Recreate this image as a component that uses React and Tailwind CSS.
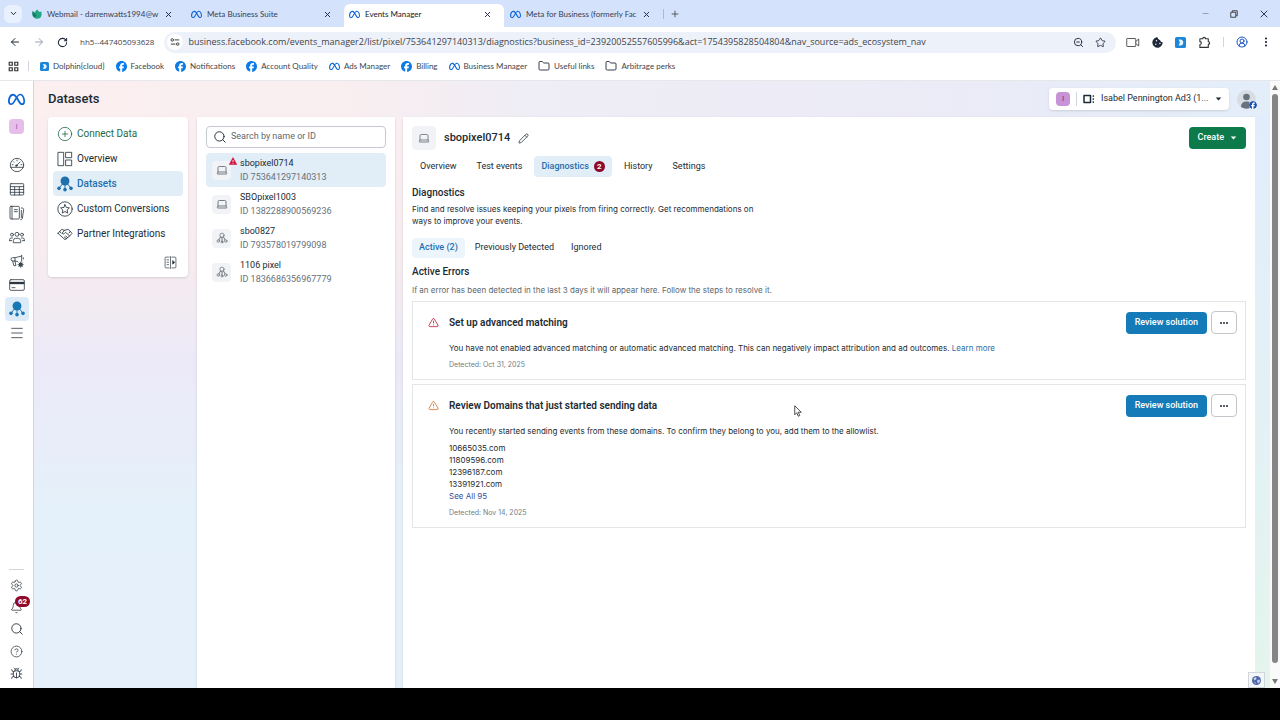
import React from "react";
import {
  ArrowLeft,
  ArrowRight,
  Bell,
  Bug,
  ChevronDown,
  CircleHelp,
  CirclePlus,
  CircleUserRound,
  EllipsisVertical,
  Folder,
  Laptop,
  Menu,
  Minus,
  Pencil,
  Plus,
  RotateCw,
  Search,
  Settings,
  Star,
  TriangleAlert,
  X,
  ZoomOut,
} from "lucide-react";
import { FaCookieBite, FaFacebook, FaMeta } from "react-icons/fa6";

/* ---------------- DATA ---------------- */
const PAGE_URL =
  "business.facebook.com/events_manager2/list/pixel/753641297140313/diagnostics?business_id=23920052557605996&act=1754395828504804&nav_source=ads_ecosystem_nav";

const BOOKMARKS = [
  { label: "Dolphin{cloud}", icon: "dolphin" },
  { label: "Facebook", icon: "facebook" },
  { label: "Notifications", icon: "facebook" },
  { label: "Account Quality", icon: "facebook" },
  { label: "Ads Manager", icon: "meta" },
  { label: "Billing", icon: "facebook" },
  { label: "Business Manager", icon: "meta" },
  { label: "Useful links", icon: "folder" },
  { label: "Arbitrage perks", icon: "folder" },
];

const PIXELS = [
  { name: "sbopixel0714", id: "753641297140313", icon: "laptop", active: true },
  { name: "SBOpixel1003", id: "1382288900569236", icon: "laptop" },
  { name: "sbo0827", id: "793578019799098", icon: "nodes" },
  { name: "1106 pixel", id: "1836686356967779", icon: "nodes" },
];

const DOMAINS = ["10665035.com", "11809596.com", "12396187.com", "13391921.com"];

/* ---------------- ICONS ---------------- */
const Svg = ({ size = 16, children }) => (
  <svg
    width={size}
    height={size}
    viewBox="0 0 24 24"
    fill="none"
    stroke="currentColor"
    strokeWidth="1.2"
    strokeLinecap="round"
    strokeLinejoin="round"
    className="shrink-0"
    aria-hidden="true"
  >
    {children}
  </svg>
);

const NodesSolid = () => (
  <Svg>
    <g fill="currentColor" stroke="none">
      <circle cx="12" cy="7.5" r="6.7" />
      <circle cx="3" cy="18.5" r="2.7" />
      <circle cx="12" cy="20.5" r="2.7" />
      <circle cx="21" cy="18.5" r="2.7" />
    </g>
    <path d="M12 12v8M8 12l-4.500 6M16 12l4.500 6" strokeWidth="1.4" />
  </Svg>
);

const NodesOutline = () => (
  <Svg size={12}>
    <circle cx="12" cy="6.500" r="4.200" />
    <circle cx="4.500" cy="18" r="2.500" />
    <circle cx="12" cy="20" r="2" />
    <circle cx="19.500" cy="18" r="2.500" />
    <path d="M12 11v7M9 10 6 15.500M15 10l3 5.500" strokeWidth="1.600" />
  </Svg>
);

const OverviewIcon = () => (
  <Svg>
    <rect x="2" y="2" width="8" height="20" />
    <rect x="13.500" y="2" width="8.500" height="8" />
    <rect x="13.500" y="13.500" width="8.500" height="8.500" />
  </Svg>
);

const StarCircle = () => (
  <Svg>
    <circle cx="12" cy="12" r="10.800" />
    <path d="m12 5.500 2 4.200 4.600.6-3.400 3.200.9 4.600-4.100-2.300-4.100 2.300.9-4.600-3.400-3.200 4.600-.6z" />
  </Svg>
);

const HandshakeIcon = () => (
  <Svg>
    <path d="M1.500 11 7 5l4 1.500L7.500 11q1.500 2 4 0l1.500-1.500 6 5.500-7 5.500L1.500 11z" />
    <path d="M11 6.500 17 5l5.500 6-3.500 4M16 17.500l-3-2.500M14 19l-3-2.500M4 8.200l2 2.300M20 8.200l-2 2.300" />
  </Svg>
);

const GaugeIcon = () => (
  <Svg>
    <circle cx="12" cy="12" r="10" />
    <path d="M2.500 15.500h19M11 13l5.500-5.500M12 4.500v1.200M6.500 7l.9.9M4.800 11.500H6M18 11.500h1.200" />
    <circle cx="11" cy="13" r="1.300" />
  </Svg>
);

const TableIcon = () => (
  <Svg>
    <rect x="2" y="4" width="20" height="17" rx="1" />
    <path d="M2 8.500h20M2 12.800h20M2 17h20M8.500 8.500V21M15.500 8.500V21" />
  </Svg>
);

const PagesIcon = () => (
  <Svg>
    <rect x="1.500" y="2" width="14" height="19" rx="1.500" />
    <path d="M4.500 2v19M8 7h4.500M8 10h4.500M18.500 4.500H20q2 .3 2 2.500l-2 13q-.4 2-2.500 2.200M18.500 8v11" />
  </Svg>
);

const PeopleIcon = () => (
  <Svg>
    <circle cx="12" cy="8" r="3" />
    <circle cx="4.500" cy="8.500" r="2.200" />
    <circle cx="19.500" cy="8.500" r="2.200" />
    <path d="M6.500 20v-2.500q.3-3.500 3.500-3.500h4q3.200 0 3.500 3.500V20zM1 17.500v-1.800q.2-2.200 2.500-2.200h2M23 17.500v-1.800q-.2-2.200-2.500-2.200h-2M1 17.500h3M20 17.500h3" />
  </Svg>
);

const MegaphoneIcon = () => (
  <Svg>
    <path d="M19 3.500v9M19 4.500 9.500 7H5.500Q3 7 3 9.500T5.500 12H10l3 1M9 7v5M5.500 12l1.800 7h3L9 12M21.500 7v2" />
    <circle cx="17.500" cy="17.500" r="2.200" strokeWidth="1.800" />
    <path d="M17.500 13.500v8M13.500 17.500h8M14.700 14.700l5.600 5.600M20.300 14.700l-5.600 5.600" strokeWidth="1" />
  </Svg>
);

const CardIcon = () => (
  <Svg>
    <rect x="1" y="4" width="22" height="16" rx="2" />
    <path d="M1 9h22" strokeWidth="3.500" strokeLinecap="butt" />
    <path d="M4.500 16H9" />
  </Svg>
);

const CollapseIcon = () => (
  <Svg size={13}>
    <path d="M9.500 2H4Q2 2 2 4v16q0 2 2 2h5.500M14.500 2H20q2 0 2 2v16q0 2-2 2h-5.500M12 1v22" />
    <path d="M5.500 7h3M5.500 11.500h3M5.500 16h3" />
    <path d="M16 9v6l3.500-3z" fill="currentColor" />
  </Svg>
);

const AlertBadge = () => (
  <svg width="8" height="8" viewBox="0 0 16 16" className="absolute -top-1 -right-1.5" aria-hidden="true">
    <path d="M8 1l7.500 14H.5z" fill="#d3133f" stroke="#d3133f" strokeLinejoin="round" />
    <path d="M8 6v4.500M8 12v1.500" stroke="#fff" strokeWidth="1.600" />
  </svg>
);

const AccountIcon = () => (
  <Svg size={12}>
    <rect x="2" y="5" width="13" height="14" strokeWidth="3" />
    <path d="M20.500 5v2M20.500 11v2M20.500 17v2" strokeWidth="2.400" />
  </Svg>
);

const TuneIcon = () => (
  <svg width="10" height="10" viewBox="0 0 24 24" fill="none" stroke="#3c4043" strokeWidth="2.400" aria-hidden="true">
    <circle cx="5.500" cy="7" r="3" />
    <path d="M11 7h11M2 17h11" />
    <circle cx="18.500" cy="17" r="3" />
  </svg>
);

const AppsIcon = () => (
  <svg width="11" height="11" viewBox="0 0 22 22" fill="none" stroke="#333" strokeWidth="2.400" aria-hidden="true">
    <path d="M2.500 2.500h6v6h-6zM13.500 2.500h6v6h-6zM2.500 13.500h6v6h-6zM13.500 13.500h6v6h-6z" />
  </svg>
);

const DolphinIcon = ({ size = 9 }) => (
  <svg width={size} height={size} viewBox="0 0 18 18" className="shrink-0" aria-hidden="true">
    <rect width="18" height="18" rx="3" fill="#1c86d8" />
    <path d="M6 4h2.500q5 .5 5 5t-5 5H6l2-5z" fill="#e8f7ff" />
  </svg>
);

const WebmailIcon = () => (
  <svg width="10" height="10" viewBox="0 0 20 20" className="shrink-0" aria-hidden="true">
    <path d="M1 4l4 3 5-6 5 5 4-1v8q-2 6.500-9 6.500T1 12z" fill="#23a583" />
    <path d="M1 4l9 10-6 2q-3-2-3-5z" fill="#157a66" />
  </svg>
);

const VideoIcon = () => (
  <svg width="14" height="11" viewBox="0 0 28 22" fill="none" stroke="#333" strokeWidth="1.600" aria-hidden="true">
    <rect x="1.500" y="3" width="18" height="16" rx="1" />
    <path d="M19.500 9l6-5v14l-6-5" />
  </svg>
);

const PuzzleIcon = () => (
  <svg width="13" height="13" viewBox="0 0 24 24" fill="none" stroke="#333" strokeWidth="2" strokeLinejoin="round" aria-hidden="true">
    <path d="M3.500 5h5.300a2.500 2.500 0 1 1 5 0H19v5.500a2.500 2.500 0 1 1 0 5V21H3.500v-5.200a2.700 2.700 0 0 0 0-5.400z" />
  </svg>
);

const RestoreIcon = () => (
  <svg width="8" height="8" viewBox="0 0 16 16" fill="none" stroke="#222" strokeWidth="1.600" aria-hidden="true">
    <path d="M1.500 4.500h10v10h-10zM4.500 4V1.500h10v10H12" />
  </svg>
);

const Caret = () => (
  <svg width="7" height="4" viewBox="0 0 8 5" fill="currentColor" aria-hidden="true">
    <path d="M.5.500h7L4 4.500z" />
  </svg>
);

const MetaIcon = () => <FaMeta size={11} className="shrink-0 text-[#0a66d8]" />;

const BookmarkIcon = ({ icon }) => {
  if (icon === "dolphin") return <DolphinIcon />;
  if (icon === "facebook") return <FaFacebook size={11} className="text-[#0b7be8]" />;
  if (icon === "meta") return <MetaIcon />;
  return <Folder size={12} strokeWidth={1.8} className="text-gray-800" />;
};

/* ---------------- BROWSER CHROME ---------------- */
const BrowserTab = ({ title, icon, active }) => (
  <div
    className={
      active
        ? "flex items-center w-[160px] h-[23px] pb-[3px] pl-[5px] pr-3 gap-[5px] rounded-t-md bg-white text-gray-900"
        : "flex items-center w-[159px] h-[23px] pb-[3px] pl-[6px] pr-3 gap-[5px] text-gray-700"
    }
  >
    {icon}
    <span className="flex-1 whitespace-nowrap">{title}</span>
    <button aria-label={`Close ${title}`}>
      <X size={9} strokeWidth={2.5} className="text-gray-800" />
    </button>
  </div>
);

const BrowserChrome = () => (
  <header className="shrink-0 font-['Lato',sans-serif] text-[#41444a]">
    <div className="flex items-end h-[27px] bg-[#d5e2fc] text-[8px]">
      <button aria-label="Search tabs" className="flex items-center justify-center self-center w-[18px] h-[18px] ml-1 mr-1 rounded-md bg-[#e9f1fe]">
        <ChevronDown size={9} strokeWidth={2.5} className="text-gray-900" />
      </button>
      <BrowserTab title="Webmail - darrenwatts1994@w" icon={<WebmailIcon />} />
      <BrowserTab title="Meta Business Suite" icon={<MetaIcon />} />
      <BrowserTab title="Events Manager" active icon={<MetaIcon />} />
      <BrowserTab title="Meta for Business (formerly Fac" icon={<MetaIcon />} />
      <div className="flex items-center h-[23px] pb-[3px] gap-[6px]">
        <span className="w-px h-[10px] bg-[#a9bbdd]" />
        <button aria-label="New tab">
          <Plus size={10} strokeWidth={2} />
        </button>
      </div>
      <div className="flex items-center h-[27px] gap-5 ml-auto pr-[10px] text-gray-800">
        <button aria-label="Minimize" className="text-gray-500">
          <Minus size={9} strokeWidth={1.5} />
        </button>
        <button aria-label="Restore">
          <RestoreIcon />
        </button>
        <button aria-label="Close window">
          <X size={12} strokeWidth={1.8} />
        </button>
      </div>
    </div>

    <div className="flex items-center h-[30px] bg-white pl-[9px] pr-2 font-['Open_Sans',sans-serif]">
      <div className="flex items-center gap-3 text-gray-800">
        <button aria-label="Back">
          <ArrowLeft size={12} strokeWidth={2} />
        </button>
        <button aria-label="Forward" className="text-gray-400">
          <ArrowRight size={12} strokeWidth={2} />
        </button>
        <button aria-label="Reload">
          <RotateCw size={11} strokeWidth={2.2} />
        </button>
      </div>
      <span className="ml-3 text-[8px] whitespace-nowrap">hh5--447405093628</span>
      <div className="flex flex-1 items-center h-[21px] ml-[10px] pl-[3px] pr-[10px] rounded-full bg-[#edf1fa]">
        <span className="flex items-center justify-center w-[16px] h-[16px] rounded-full bg-white">
          <TuneIcon />
        </span>
        <input
          aria-label="Address"
          className="flex-1 ml-[5px] bg-transparent text-[9px] outline-none"
          defaultValue={PAGE_URL}
        />
        <div className="flex items-center gap-[11px] text-gray-800">
          <ZoomOut size={11} strokeWidth={2} />
          <Star size={11} strokeWidth={1.8} />
        </div>
      </div>
      <div className="flex items-center gap-3 ml-[10px] text-gray-800">
        <VideoIcon />
        <FaCookieBite size={11} />
        <DolphinIcon size={11} />
        <PuzzleIcon />
        <span className="w-px h-[10px] bg-gray-300" />
        <CircleUserRound size={12} strokeWidth={2} className="text-[#1a56c4]" />
        <EllipsisVertical size={12} strokeWidth={2.4} />
      </div>
    </div>

    <nav className="flex items-center h-[24px] pb-[5px] pl-2 bg-white border-b border-gray-200 text-[8px]">
      <AppsIcon />
      <span className="w-px h-[10px] ml-[9px] mr-[11px] bg-gray-300" />
      <ul className="flex items-center gap-[11px]">
        {BOOKMARKS.map((b) => (
          <li key={b.label}>
            <a href="#" className="flex items-center gap-1 whitespace-nowrap">
              <BookmarkIcon icon={b.icon} />
              {b.label}
            </a>
          </li>
        ))}
      </ul>
    </nav>
  </header>
);

/* ---------------- LEFT RAIL ---------------- */
const RailButton = ({ label, active, children }) => (
  <button
    aria-label={label}
    className={
      active
        ? "flex items-center justify-center w-6 h-6 rounded-sm bg-[#dcebf7] text-[#1877b5]"
        : "flex items-center justify-center w-6 h-6"
    }
  >
    {children}
  </button>
);

const Rail = () => (
  <aside className="flex flex-col items-center justify-between shrink-0 w-[34px] pt-[6px] pb-1 bg-white border-r border-gray-300 text-[#2b3640]">
    <div className="flex flex-col items-center">
      <RailButton label="Home">
        <FaMeta size={17} className="text-[#0a66d8]" />
      </RailButton>
      <span className="flex items-center justify-center w-[15px] h-[15px] mt-2 mb-[19px] rounded-sm bg-[#e5bfe9] text-[8px] text-[#a05bb0]">
        I
      </span>
      <RailButton label="Account overview"><GaugeIcon /></RailButton>
      <RailButton label="Campaigns"><TableIcon /></RailButton>
      <RailButton label="Ads reporting"><PagesIcon /></RailButton>
      <RailButton label="Audiences"><PeopleIcon /></RailButton>
      <RailButton label="Advertising settings"><MegaphoneIcon /></RailButton>
      <RailButton label="Billing and payments"><CardIcon /></RailButton>
      <RailButton label="Events Manager" active><NodesSolid /></RailButton>
      <RailButton label="All tools"><Menu size={16} strokeWidth={1.2} /></RailButton>
    </div>
    <div className="flex flex-col items-center">
      <span className="w-[15px] h-px mb-1 bg-gray-300" />
      <button aria-label="Settings" className="flex items-center h-[22px]"><Settings size={13} strokeWidth={1.4} /></button>
      <button aria-label="Notifications" className="relative flex items-center h-[22px]">
        <Bell size={13} strokeWidth={1.4} />
        <span className="absolute top-0 left-[5px] w-[15px] h-[11px] rounded-full bg-[#8f0a2a] text-white text-[8px] leading-[11px] font-bold text-center">
          62
        </span>
      </button>
      <button aria-label="Search" className="flex items-center h-[22px]"><Search size={14} strokeWidth={1.6} /></button>
      <button aria-label="Help" className="flex items-center h-[22px]"><CircleHelp size={13} strokeWidth={1.4} /></button>
      <button aria-label="Report a bug" className="flex items-center h-[22px]"><Bug size={13} strokeWidth={1.6} /></button>
    </div>
  </aside>
);

/* ---------------- SECTION MENU ---------------- */
const MenuItem = ({ icon, label, className = "" }) => (
  <li>
    <a href="#" className={`flex items-center h-[25px] gap-1 pl-1 rounded-sm whitespace-nowrap ${className}`}>
      {icon}
      {label}
    </a>
  </li>
);

const SectionMenu = () => (
  <nav className="self-start shrink-0 w-[140px] px-[5px] pt-1 pb-2 rounded-sm bg-white shadow-sm text-[10px]">
    <ul>
      <MenuItem icon={<CirclePlus size={16} strokeWidth={1.2} />} label="Connect Data" className="text-[#1d6b4a]" />
      <MenuItem icon={<OverviewIcon />} label="Overview" />
      <MenuItem icon={<NodesSolid />} label="Datasets" className="bg-[#e1eef8] text-[#1f6fae] font-medium" />
      <MenuItem icon={<StarCircle />} label="Custom Conversions" />
      <MenuItem icon={<HandshakeIcon />} label="Partner Integrations" />
    </ul>
    <div className="flex justify-end pt-[10px] pr-[6px]">
      <button aria-label="Collapse menu">
        <CollapseIcon />
      </button>
    </div>
  </nav>
);

/* ---------------- PIXEL LIST ---------------- */
const PixelList = () => (
  <section className="shrink-0 w-[198px] px-[9px] pt-[9px] bg-white shadow-sm">
    <label className="flex items-center h-[22px] gap-1 px-[6px] border border-[#c5cad0] rounded-sm">
      <Search size={14} strokeWidth={1.6} />
      <input
        aria-label="Search by name or ID"
        placeholder="Search by name or ID"
        className="flex-1 min-w-0 text-[9px] outline-none placeholder:text-[#5d6870]"
      />
    </label>
    <ul className="mt-[5px]">
      {PIXELS.map((p) => (
        <li key={p.id}>
          <a
            href="#"
            className={
              p.active
                ? "flex items-center h-[34px] gap-[9px] pl-[6px] rounded-sm bg-[#e1edf7]"
                : "flex items-center h-[34px] gap-[9px] pl-[6px]"
            }
          >
            <span className="relative flex items-center justify-center w-[19px] h-[19px] rounded-sm bg-[#f1f3f6] text-[#4c5660]">
              {p.icon === "laptop" ? <Laptop size={12} strokeWidth={1.5} /> : <NodesOutline />}
              {p.active && <AlertBadge />}
            </span>
            <span className="flex flex-col text-[9px] leading-[14px]">
              <span>{p.name}</span>
              <span className="text-[#66717b]">ID {p.id}</span>
            </span>
          </a>
        </li>
      ))}
    </ul>
  </section>
);

/* ---------------- DIAGNOSTICS ---------------- */
const ErrorCard = ({ title, tone, detected, children }) => (
  <article className="flex items-start gap-[10px] pt-[9px] pb-2 pl-[15px] pr-2 border border-[#e3e5e8]">
    <TriangleAlert size={11} strokeWidth={1.8} className={`mt-[6px] shrink-0 ${tone}`} />
    <div className="flex-1">
      <div className="flex items-center justify-between">
        <h3 className="text-[10px] font-semibold">{title}</h3>
        <div className="flex items-center gap-1">
          <button className="h-[22px] px-[9px] rounded-sm bg-[#147ab8] text-white text-[9px] font-medium">
            Review solution
          </button>
          <button aria-label="More options" className="flex items-center justify-center gap-px w-[26px] h-[23px] border border-[#c2c6ca] rounded-sm">
            <span className="w-[2px] h-[2px] rounded-full bg-gray-800" />
            <span className="w-[2px] h-[2px] rounded-full bg-gray-800" />
            <span className="w-[2px] h-[2px] rounded-full bg-gray-800" />
          </button>
        </div>
      </div>
      <div className="mt-2 font-['Inter',sans-serif] text-[8px] leading-3">{children}</div>
      <p className="mt-[5px] font-['Inter',sans-serif] text-[7px] leading-3 text-[#737c85]">Detected: {detected}</p>
    </div>
  </article>
);

const Diagnostics = () => (
  <main className="flex-1 min-w-0 px-[9px] pt-[9px] bg-white shadow-sm">
    <div className="flex items-center justify-between">
      <div className="flex items-center gap-2">
        <span className="flex items-center justify-center w-6 h-6 rounded-sm bg-[#f1f3f6] text-[#55606a]">
          <Laptop size={12} strokeWidth={1.5} />
        </span>
        <h2 className="text-[11px] font-medium">sbopixel0714</h2>
        <button aria-label="Edit name">
          <Pencil size={11} strokeWidth={1.6} />
        </button>
      </div>
      <button className="flex items-center gap-[6px] h-[22px] px-[9px] rounded-sm bg-[#0c7a4b] text-white text-[9px] font-medium">
        Create
        <Caret />
      </button>
    </div>

    <div role="tablist" className="flex items-center h-[21px] mt-[6px] gap-1 text-[9px]">
      <button role="tab" className="h-full px-2">Overview</button>
      <button role="tab" className="h-full px-2">Test events</button>
      <button role="tab" aria-selected="true" className="flex items-center gap-[5px] h-full px-[7px] rounded-sm bg-[#e1edf7] text-[#1f6fae] font-medium">
        Diagnostics
        <span className="w-[11px] h-[11px] rounded-full bg-[#8f0a2a] text-white text-[8px] leading-[11px] font-bold">2</span>
      </button>
      <button role="tab" className="h-full px-2">History</button>
      <button role="tab" className="h-full px-2">Settings</button>
    </div>

    <h3 className="mt-[10px] text-[10px] leading-3 font-medium">Diagnostics</h3>
    <p className="mt-1 max-w-[350px] font-['Inter',sans-serif] text-[8px] leading-3">
      Find and resolve issues keeping your pixels from firing correctly. Get recommendations on ways to improve your events.
    </p>

    <div className="flex items-center h-5 mt-[11px] gap-[3px] text-[9px]">
      <button className="h-full px-[7px] rounded-sm bg-[#edf5fc] text-[#1f6fae] font-medium">Active (2)</button>
      <button className="h-full px-[7px]">Previously Detected</button>
      <button className="h-full px-[7px]">Ignored</button>
    </div>

    <h3 className="mt-2 text-[10px] leading-3 font-medium">Active Errors</h3>
    <p className="mt-[6px] font-['Inter',sans-serif] text-[8px] leading-3 text-[#5d6870]">
      If an error has been detected in the last 3 days it will appear here. Follow the steps to resolve it.
    </p>

    <div className="flex flex-col gap-1 mt-[5px]">
      <ErrorCard title="Set up advanced matching" tone="text-[#c01c3c]" detected="Oct 31, 2025">
        You have not enabled advanced matching or automatic advanced matching. This can negatively impact attribution and ad outcomes.{" "}
        <a href="#" className="text-[#2a6fa8]">Learn more</a>
      </ErrorCard>
      <ErrorCard title="Review Domains that just started sending data" tone="text-[#d9772c]" detected="Nov 14, 2025">
        <p>You recently started sending events from these domains. To confirm they belong to you, add them to the allowlist.</p>
        <ul className="mt-[5px]">
          {DOMAINS.map((d) => (
            <li key={d}>{d}</li>
          ))}
        </ul>
        <a href="#" className="text-[#3a4f9a]">See All 95</a>
      </ErrorCard>
    </div>
  </main>
);

const App = () => (
  <div className="flex flex-col h-screen overflow-hidden bg-black text-[#1c2b33]">
    <BrowserChrome />

    <div className="relative flex flex-1 min-h-0 mb-8 font-['Roboto',sans-serif]">
      <Rail />

      <div className="flex flex-col flex-1 min-w-0 bg-[linear-gradient(180deg,#fbeff0_0%,#f8edf0_25%,#f1ebf2_38%,#ece9f8_46%,#e9edf9_58%,#e5f1fa_70%,#e5f0fa_100%)]">
        <div className="flex items-center justify-between h-9 px-[14px] bg-[linear-gradient(90deg,#fbeff0_0%,#f9eef0_25%,#efedf5_40%,#ebebf7_75%,#e3eefa_100%)]">
          <h1 className="text-[13px] font-medium">Datasets</h1>
          <div className="flex items-center gap-2">
            <button className="flex items-center h-[22px] px-[7px] gap-[6px] rounded-sm bg-white shadow-sm text-[9px]">
              <span className="flex items-center justify-center w-[14px] h-[14px] rounded-sm bg-[#c792d6] text-[8px] text-[#6a2a80]">I</span>
              <span className="w-px h-[14px] bg-gray-300" />
              <AccountIcon />
              <span className="w-[108px] text-left">Isabel Pennington Ad3 (1...</span>
              <Caret />
            </button>
            <span className="relative flex items-end justify-center w-[19px] h-[19px] rounded-full bg-[#d8dde3] text-[#68727c]">
              <svg width="19" height="19" viewBox="0 0 19 19" fill="currentColor" aria-hidden="true">
                <circle cx="9.500" cy="7" r="3.300" />
                <path d="M4 17q0-5.500 5.500-5.500T15 17q-5.500 3.500-11 0z" />
              </svg>
              <FaFacebook size={8} className="absolute -right-px bottom-0 rounded-full bg-white text-[#1a4fb8]" />
            </span>
          </div>
        </div>
        <div className="flex flex-1 min-h-0 pl-[14px]">
          <SectionMenu />
          <div className="flex flex-1 min-w-0 ml-[9px] gap-2">
            <PixelList />
            <Diagnostics />
          </div>
          <div className="w-[15px] bg-linear-to-b from-[#e1edfb] via-[#e3f1f6] to-[#e4f5ec]" />
        </div>
      </div>

      <div className="flex flex-col items-center shrink-0 w-[10px] py-1 gap-1 bg-[#fafafa] text-[#777]">
        <svg width="6" height="5" viewBox="0 0 6 5" fill="currentColor" aria-hidden="true"><path d="M3 0l3 5H0z" /></svg>
        <div className="flex-1 w-[6px] mb-3 rounded-full bg-[#858585]" />
        <svg width="6" height="5" viewBox="0 0 6 5" fill="currentColor" aria-hidden="true"><path d="M3 5l3-5H0z" /></svg>
      </div>

      {/* Language badge over the page corner */}
      <div className="absolute right-[15px] bottom-0 flex items-center justify-center w-[17px] h-[16px] border border-gray-300 bg-[#f4f7f9]">
        <svg width="9" height="9" viewBox="0 0 18 18" aria-hidden="true">
          <circle cx="9" cy="9" r="9" fill="#5068a8" />
          <path d="M3 5l5-3 1 4-4 3zM10 9l5-2 1 4-4 4zM4 12l3 1v3z" fill="#c9d6f2" />
        </svg>
      </div>

      {/* Mouse pointer */}
      <svg width="8" height="12" viewBox="0 0 16 24" className="absolute left-[794px] top-[324px]" aria-hidden="true">
        <path d="M1.500 1.500v18l4-4 3 7 3-1.400-3-6.600h6z" fill="#fff" stroke="#222" strokeWidth="1.600" />
      </svg>
    </div>
  </div>
);

export default App;
